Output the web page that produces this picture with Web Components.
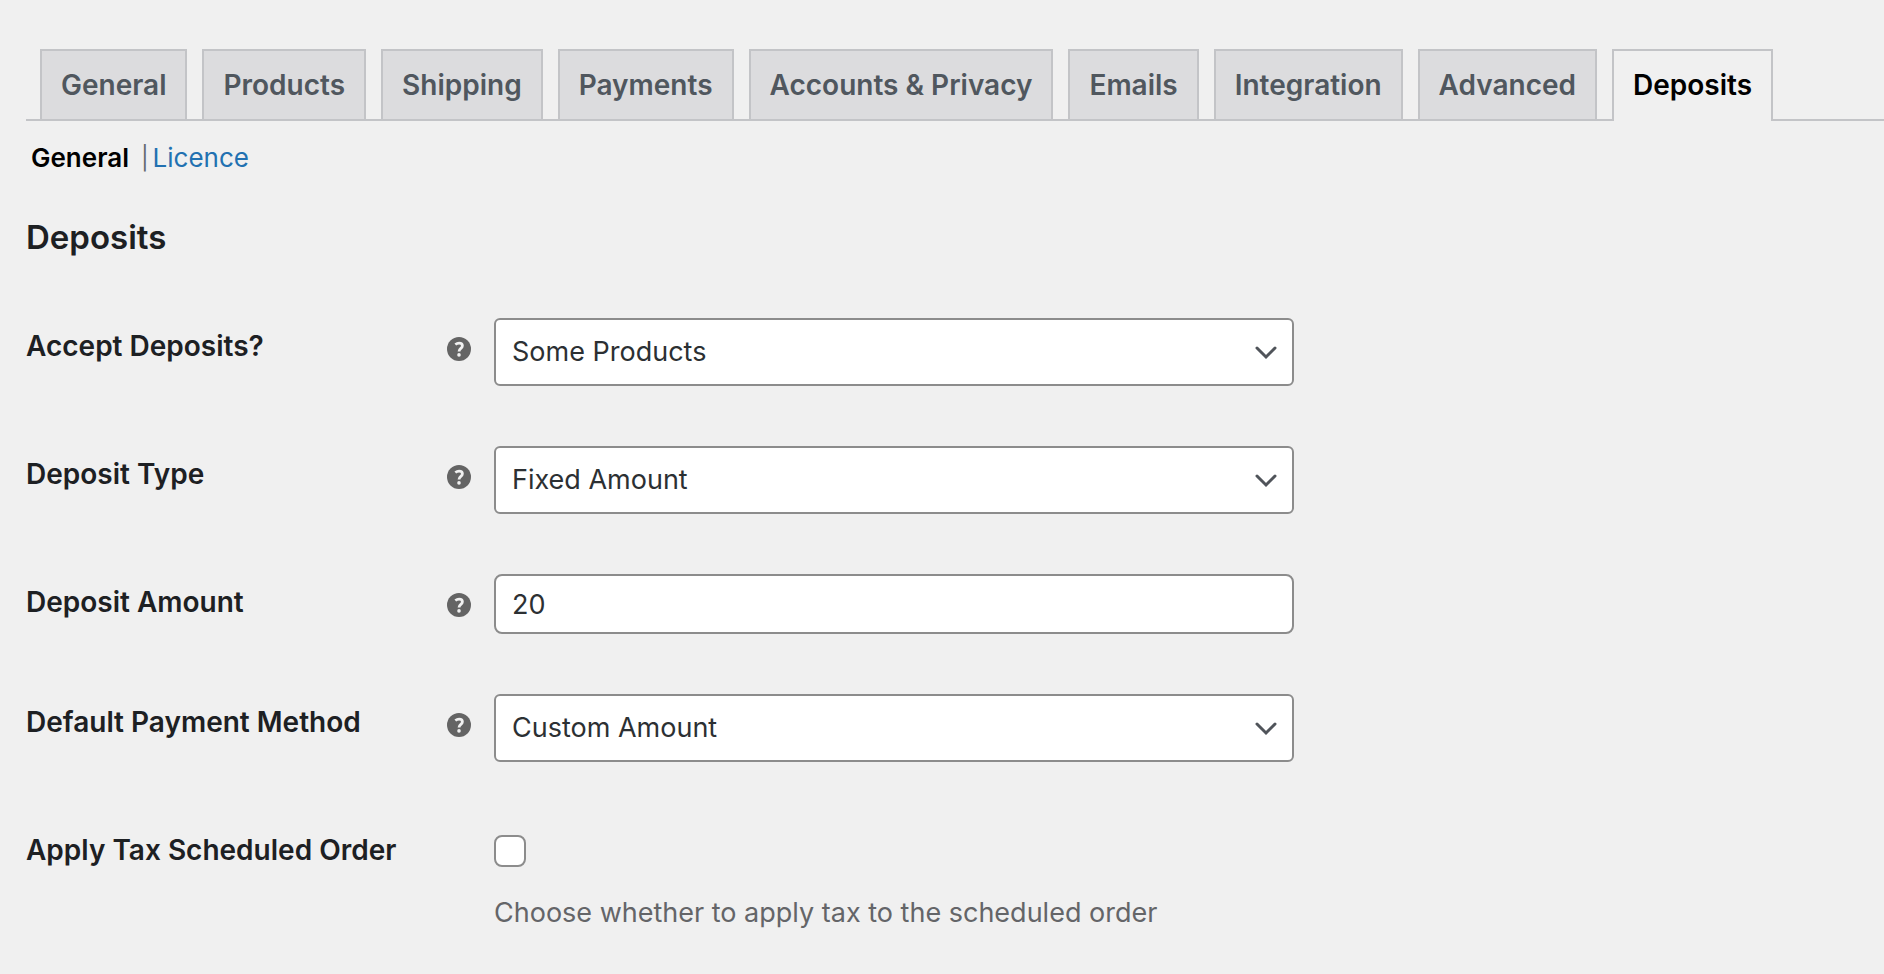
<!DOCTYPE html>
<html lang="en">
<head>
<meta charset="utf-8">
<meta name="viewport" content="width=device-width, initial-scale=1">
<title>Deposits</title>
<style>
  body {
    margin: 0;
    background: #f0f0f0;
    color: #1d2023;
    font-family: Inter, "Liberation Sans", sans-serif;
    font-size: 27px;
    line-height: 36px;
  }
</style>
</head>
<body>

<settings-page>
  <settings-tabs slot="tabs">
    <settings-tab>General</settings-tab>
    <settings-tab>Products</settings-tab>
    <settings-tab>Shipping</settings-tab>
    <settings-tab>Payments</settings-tab>
    <settings-tab>Accounts &amp; Privacy</settings-tab>
    <settings-tab>Emails</settings-tab>
    <settings-tab>Integration</settings-tab>
    <settings-tab>Advanced</settings-tab>
    <settings-tab active>Deposits</settings-tab>
  </settings-tabs>
  <section-links slot="links" items="General,Licence"></section-links>
  <span slot="title">Deposits</span>
  <settings-field type="select" label="Accept Deposits?" value="Some Products" tip></settings-field>
  <settings-field type="select" label="Deposit Type" value="Fixed Amount" tip></settings-field>
  <settings-field type="text" label="Deposit Amount" value="20" tip></settings-field>
  <settings-field type="select" label="Default Payment Method" value="Custom Amount" tip></settings-field>
  <settings-field type="checkbox" label="Apply Tax Scheduled Order">Choose whether to apply tax to the scheduled order</settings-field>
</settings-page>

<script>
'use strict'

const attach = (el, html) => {
  el.attachShadow({ mode: 'open' }).innerHTML = html
}


// PAGE

customElements.define('settings-page',
  class extends HTMLElement {
    constructor() {
      super()
      attach(this, `
        <style>
          :host { display: block; padding: 49px 0 40px 26px; }
          h2 { margin: 39px 0 59px; font-size: 33px; line-height: 44px; font-weight: 600; }
          form { display: flex; flex-direction: column; gap: 60px; }
        </style>
        <slot name="tabs"></slot>
        <slot name="links"></slot>
        <h2><slot name="title"></slot></h2>
        <form><slot></slot></form>
      `)
    }
  }
)


// TABS

customElements.define('settings-tabs',
  class extends HTMLElement {
    constructor() {
      super()
      attach(this, `
        <style>
          :host { display: block; }
          nav {
            display: flex;
            gap: 15px;
            padding-left: 14px;
            border-bottom: 2px solid #c3c4c7;
          }
        </style>
        <nav><slot></slot></nav>
      `)
    }
  }
)

customElements.define('settings-tab',
  class extends HTMLElement {
    constructor() {
      super()
      attach(this, `
        <style>
          :host { display: block; }
          a {
            display: block;
            padding: 16px 19px;
            border: 2px solid #c3c4c7;
            border-bottom: 0;
            background: #dcdcde;
            color: #50575e;
            font-size: 28px;
            font-weight: 600;
            text-decoration: none;
            white-space: nowrap;
          }
          :host([active]) { margin-bottom: -2px; }
          :host([active]) a {
            padding-bottom: 18px;
            background: #f0f0f0;
            color: #000;
          }
        </style>
        <a href="#"><slot></slot></a>
      `)
    }
  }
)


// SECTION LINKS

customElements.define('section-links',
  class extends HTMLElement {
    constructor() {
      super()
      const [current, ...rest] = this.getAttribute('items').split(',')
      attach(this, `
        <style>
          :host { display: block; margin-top: 19px; font-size: 26px; }
          ul { display: flex; margin: 0; padding: 0 0 0 5px; list-style: none; color: #646970; }
          li { display: flex; }
          a { color: #2271b1; text-decoration: none; }
          a.current { color: #000; font-weight: 600; margin-right: 12px; }
          .bar { margin-right: 4px; font-size: 23px; }
        </style>
        <ul>
          <li><a href="#" class="current">${current}</a></li>
          ${rest.map(a => `<li><span class="bar">|</span><a href="#">${a}</a></li>`).join('')}
        </ul>
      `)
    }
  }
)


// HELP TIP

customElements.define('help-tip',
  class extends HTMLElement {
    constructor() {
      super()
      attach(this, `
        <style>
          :host { display: block; width: 24px; height: 24px; }
          svg { display: block; }
        </style>
        <svg width="24" height="24" viewBox="0 0 24 24" aria-hidden="true">
          <circle cx="12" cy="12" r="12" fill="#646464"/>
          <path d="M8.3 7.5C9.6 6.5 10.8 6.1 12.1 6.1C14.2 6.1 15.4 7.1 15.4 8.8C15.4 11.5 12 11.2 12 14.6" fill="none" stroke="#f0f0f0" stroke-width="2.8"/>
          <circle cx="12" cy="17.9" r="1.8" fill="#f0f0f0"/>
        </svg>
      `)
    }
  }
)


// FIELD

const controls = {
  select: (value) => `
    <div class="select">
      <select id="control"><option>${value}</option></select>
      <svg width="24" height="18" viewBox="0 0 24 18" aria-hidden="true">
        <path d="M3 5L12 14L21 5" fill="none" stroke="#50545a" stroke-width="3" stroke-linecap="round"/>
      </svg>
    </div>
  `,
  text: (value) => `<input type="text" id="control" value="${value}">`,
  checkbox: () => `
    <input type="checkbox" id="control" aria-describedby="description">
    <p id="description"><slot></slot></p>
  `,
}

customElements.define('settings-field',
  class extends HTMLElement {
    constructor() {
      super()
      const type = this.getAttribute('type')
      attach(this, `
        <style>
          :host {
            display: grid;
            grid-template-columns: 421px 24px minmax(0, 823px);
            align-items: start;
          }
          label { padding-top: 10px; font-size: 28px; font-weight: 600; }
          help-tip { margin-top: 19px; }
          .control { grid-column: 3; padding-left: 23px; }
          select, input {
            box-sizing: border-box;
            display: block;
            margin: 0;
            border: 2px solid #8c8c8c;
            background: #fff;
            color: #2c3033;
            font: inherit;
            appearance: none;
          }
          select, input[type=text] { width: 100%; padding: 0 16px; }
          select { grid-area: 1 / 1; height: 68px; border-radius: 6px; }
          input[type=text] { height: 60px; border-radius: 8px; }
          input[type=checkbox] { width: 32px; height: 32px; margin-top: 13px; border-radius: 8px; }
          .select { display: grid; align-items: center; }
          .select svg { grid-area: 1 / 1; justify-self: end; margin-right: 16px; pointer-events: none; }
          p { margin: 28px 0 0; color: #646568; }
        </style>
        <label for="control">${this.getAttribute('label')}</label>
        ${this.hasAttribute('tip') ? '<help-tip></help-tip>' : ''}
        <div class="control">${controls[type](this.getAttribute('value'))}</div>
      `)
    }
  }
)
</script>
</body>
</html>
